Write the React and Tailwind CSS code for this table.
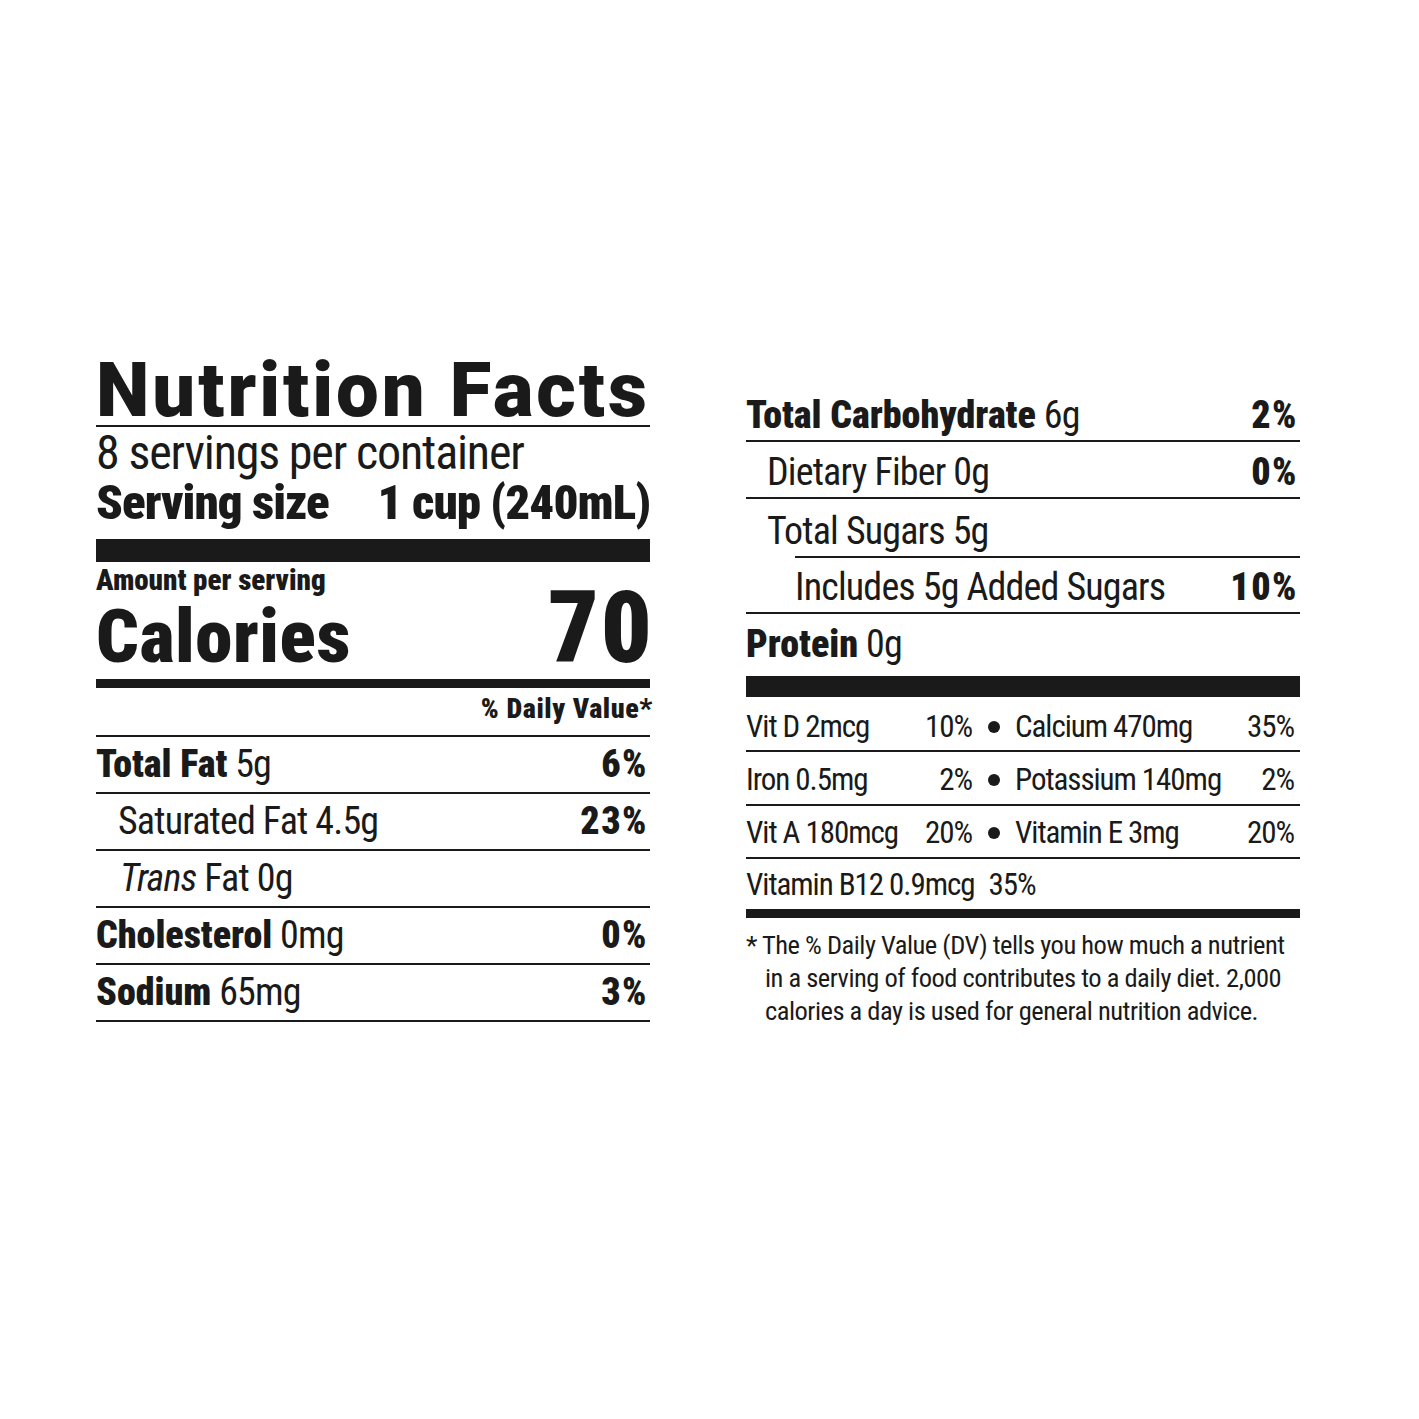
import React from "react";

const C = "font-['Roboto',sans-serif] [font-stretch:75%]";

function Row({ left, right, indent = "", cls = "" }) {
  return (
    <div className={`h-[57px] flex items-end justify-between leading-none text-[38px] tracking-[-0.022em] border-b-2 border-[#1a1a1a] pr-[2px] whitespace-nowrap ${cls}`}>
      <span className={`${indent} whitespace-nowrap`}>{left}</span>
      {right ? <span className="font-black tracking-[1.5px]">{right}</span> : null}
    </div>
  );
}

const B = ({ children }) => <span className="font-black tracking-[0px]">{children}</span>;

function VitRow({ a, ap, b, bp, h, pb }) {
  return (
    <div className={`${h} ${pb} flex items-end leading-none text-[31px] tracking-[-0.034em] border-b-2 border-[#1a1a1a] whitespace-nowrap`}>
      <span className="w-[226px] flex justify-between"><span>{a}</span><span>{ap}</span></span>
      <span className="w-[43px] flex justify-center"><span className="inline-block w-[12px] h-[12px] rounded-full bg-[#1a1a1a] mb-[9px]" /></span>
      <span className="flex-1 flex justify-between pr-[6px]"><span>{b}</span><span>{bp}</span></span>
    </div>
  );
}

export default function App() {
  return (
    <div className={`w-[1419px] h-[1419px] bg-white text-[#1a1a1a] ${C}`}>
      <div className="flex items-start pt-[355px] pl-[96px] gap-[96px]">
        {/* Left column */}
        <div className="w-[554px]">
          <div className="leading-[70px] border-b-2 border-[#1a1a1a] [font-stretch:100%] font-black text-[76px] tracking-[3px] whitespace-nowrap">
            Nutrition Facts
          </div>
          <div className="mt-[1px] text-[48px] leading-[50px] tracking-[-0.024em] whitespace-nowrap">8 servings per container</div>
          <div className="flex justify-between text-[49px] leading-[50px] font-black tracking-[-0.02em] whitespace-nowrap">
            <span>Serving size</span>
            <span>1 cup (240mL)</span>
          </div>
          <div className="mt-[11px] h-[23px] bg-[#1a1a1a]" />
          <div className="mt-[3px] text-[29px] leading-[30px] font-black tracking-[0px] whitespace-nowrap">Amount per serving</div>
          <div className="flex items-baseline justify-between leading-[66px] font-black">
            <span className="text-[75px] tracking-[0.6px]">Calories</span>
            <span className="text-[100px] tracking-[2px] mr-[-4px]">70</span>
          </div>
          <div className="mt-[10px] h-[9px] bg-[#1a1a1a]" />
          <div className="h-[49px] pt-[5px] leading-[32px] text-[28px] font-black tracking-[0.6px] text-right border-b-2 border-[#1a1a1a] whitespace-nowrap">
            <span className="mr-[-3px]">% Daily Value*</span>
          </div>
          <Row cls="pb-[9px]" left={<><B>Total Fat</B> 5g</>} right="6%" />
          <Row cls="pb-[9px]" indent="pl-[22px]" left="Saturated Fat 4.5g" right="23%" />
          <Row cls="pb-[9px]" indent="pl-[24px]" left={<><i>Trans</i> Fat 0g</>} />
          <Row cls="pb-[9px]" left={<><B>Cholesterol</B> 0mg</>} right="0%" />
          <Row cls="pb-[9px]" left={<><B>Sodium</B> 65mg</>} right="3%" />
        </div>

        {/* Right column */}
        <div className="w-[554px] mt-[30px]">
          <Row cls="pb-[6px]" left={<><B>Total Carbohydrate</B> 6g</>} right="2%" />
          <Row cls="pb-[6px]" indent="pl-[21px]" left="Dietary Fiber 0g" right="0%" />
          <div className="h-[57px] flex items-end leading-none text-[38px] tracking-[-0.022em] pb-[6px] whitespace-nowrap">
            <span className="pl-[21px]">Total Sugars 5g</span>
          </div>
          <div className="ml-[49px] border-t-2 border-[#1a1a1a]">
            <div className="h-[54px] flex items-end justify-between leading-none text-[38px] tracking-[-0.022em] pr-[2px] pb-[6px] whitespace-nowrap">
              <span>Includes 5g Added Sugars</span>
              <span className="font-black tracking-[1.5px]">10%</span>
            </div>
          </div>
          <div className="border-t-2 border-[#1a1a1a] h-[64px] flex items-end leading-none text-[38px] tracking-[-0.022em] pb-[13px] whitespace-nowrap">
            <span><B>Protein</B> 0g</span>
          </div>
          <div className="h-[21px] bg-[#1a1a1a]" />
          <VitRow h="h-[55px]" pb="pb-[8px]" a="Vit D 2mcg" ap="10%" b="Calcium 470mg" bp="35%" />
          <VitRow h="h-[54px]" pb="pb-[9px]" a="Iron 0.5mg" ap="2%" b="Potassium 140mg" bp="2%" />
          <VitRow h="h-[53px]" pb="pb-[9px]" a="Vit A 180mcg" ap="20%" b="Vitamin E 3mg" bp="20%" />
          <div className="h-[50px] flex items-end pb-[9px] leading-none text-[31px] tracking-[-0.034em] whitespace-nowrap">
            <span>Vitamin B12 0.9mcg<span className="ml-[14px]">35%</span></span>
          </div>
          <div className="h-[9px] bg-[#1a1a1a]" />
          <div className="mt-[10px] text-[26.5px] leading-[33px] tracking-[-0.5px] pl-[19px] -indent-[19px] whitespace-nowrap">
            * The % Daily Value (DV) tells you how much a nutrient
            <br />
            in a serving of food contributes to a daily diet. 2,000
            <br />
            calories a day is used for general nutrition advice.
          </div>
        </div>
      </div>
    </div>
  );
}
